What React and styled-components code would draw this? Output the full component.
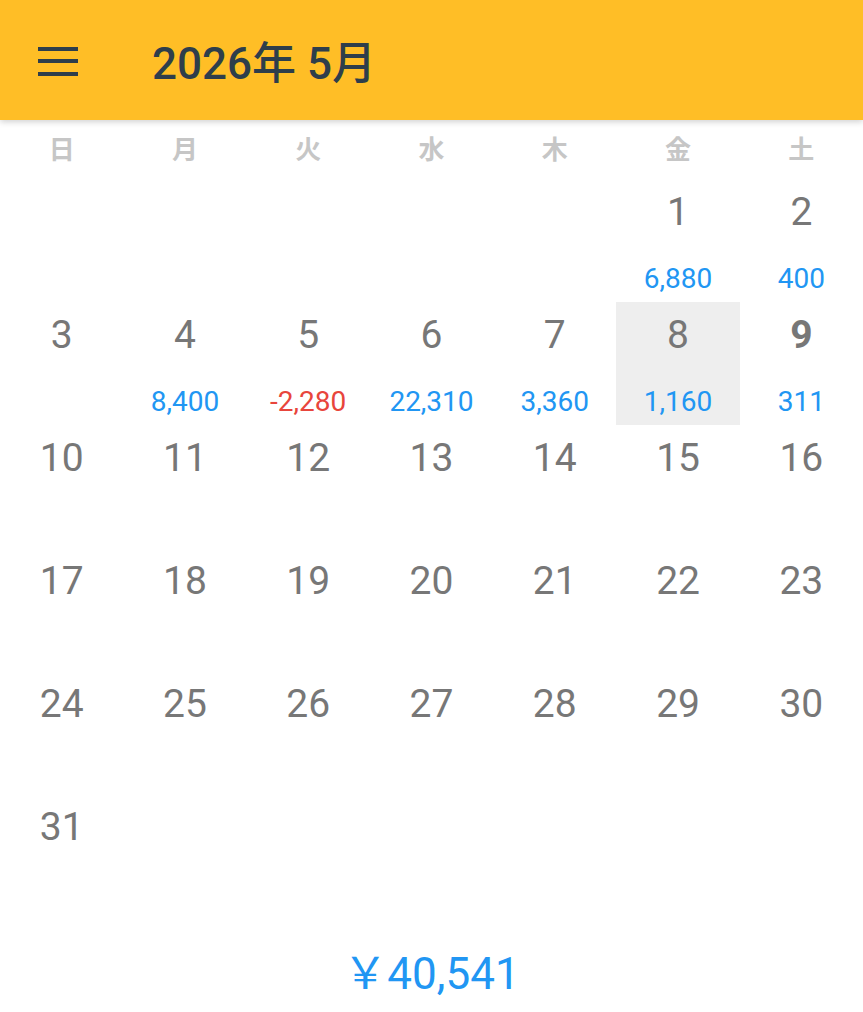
import React from "react";
import styled, { createGlobalStyle } from "styled-components";

const Global = createGlobalStyle`
  html, body { margin: 0; padding: 0; background: #ffffff; }
  body { font-family: Roboto, "Noto Sans CJK JP", sans-serif; }
`;

const Page = styled.div`
  width: 863px;
  min-height: 1012px;
  display: flex;
  flex-direction: column;
  background: #fff;
  overflow: hidden;
`;

const Header = styled.header`
  height: 120px;
  background: #ffbe26;
  display: flex;
  align-items: center;
  box-shadow: 0 2px 6px rgba(0, 0, 0, 0.18);
  position: relative;
  z-index: 1;
`;

const MenuButton = styled.div`
  width: 40px;
  height: 29px;
  margin-left: 38px;
  margin-top: 2px;
  display: flex;
  flex-direction: column;
  justify-content: space-between;
`;

const MenuLine = styled.span`
  display: block;
  height: 4px;
  background: #2e3e4b;
`;

const Title = styled.h1`
  margin: 8px 0 0 74px;
  font-family: Roboto, "Noto Sans CJK JP", sans-serif;
  font-weight: 500;
  font-size: 44px;
  color: #2e3e4b;
  letter-spacing: 0;
  line-height: 1;
`;

const WeekRow = styled.div`
  display: grid;
  grid-template-columns: repeat(7, 1fr);
  height: 59px;
  align-items: center;
`;

const WeekLabel = styled.div`
  text-align: center;
  font-family: "Noto Sans CJK JP", sans-serif;
  font-weight: 700;
  font-size: 26px;
  color: #c6c6c6;
  padding-bottom: 4px;
`;

const Grid = styled.div`
  display: grid;
  grid-template-columns: repeat(7, 1fr);
  grid-auto-rows: 123px;
`;

const Cell = styled.div`
  display: flex;
  flex-direction: column;
  align-items: center;
  background: ${(p) => (p.$selected ? "#eeeeee" : "transparent")};
`;

const DayNum = styled.div`
  margin-top: 10px;
  font-size: 39px;
  line-height: 46px;
  color: #777777;
  font-weight: ${(p) => (p.$today ? 700 : 400)};
`;

const Amount = styled.div`
  margin-top: auto;
  margin-bottom: 8px;
  font-size: 28px;
  line-height: 30px;
  color: ${(p) => (p.$negative ? "#e8453c" : "#2196f3")};
`;

const Footer = styled.div`
  padding-top: 32px;
  text-align: center;
  font-size: 44px;
  line-height: 50px;
  color: #2196f3;
  font-family: Roboto, "Noto Sans CJK JP", sans-serif;
`;

const weekdays = ["日", "月", "火", "水", "木", "金", "土"];
const amounts = {
  1: "6,880",
  2: "400",
  4: "8,400",
  5: "-2,280",
  6: "22,310",
  7: "3,360",
  8: "1,160",
  9: "311",
};

export default function App() {
  const cells = [];
  for (let i = 0; i < 5; i++) cells.push(null);
  for (let d = 1; d <= 31; d++) cells.push(d);
  return (
    <Page>
      <Global />
      <Header>
        <MenuButton>
          <MenuLine />
          <MenuLine />
          <MenuLine />
        </MenuButton>
        <Title>2026年 5月</Title>
      </Header>
      <WeekRow>
        {weekdays.map((w) => (
          <WeekLabel key={w}>{w}</WeekLabel>
        ))}
      </WeekRow>
      <Grid>
        {cells.map((d, i) =>
          d === null ? (
            <Cell key={"e" + i} />
          ) : (
            <Cell key={d} $selected={d === 8}>
              <DayNum $today={d === 9}>{d}</DayNum>
              {amounts[d] && (
                <Amount $negative={amounts[d].startsWith("-")}>{amounts[d]}</Amount>
              )}
            </Cell>
          )
        )}
      </Grid>
      <Footer>￥40,541</Footer>
    </Page>
  );
}
